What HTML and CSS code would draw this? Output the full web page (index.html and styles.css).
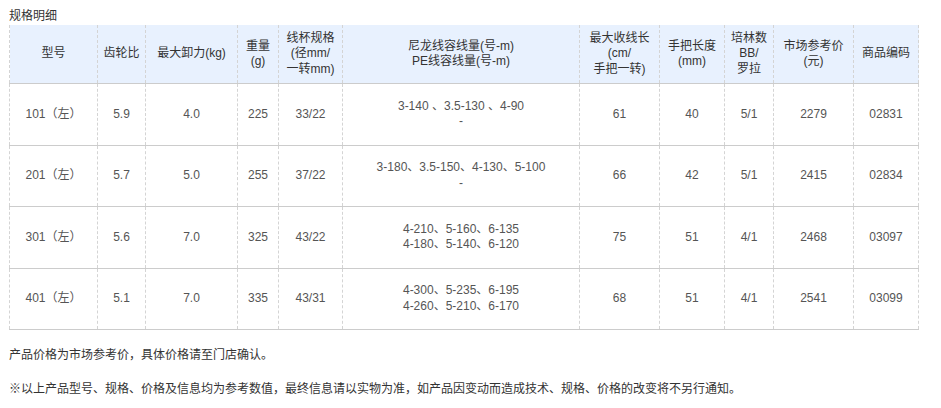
FILE: index.html
```html
<!DOCTYPE html>
<html lang="zh-CN">
<head>
<meta charset="utf-8">
<title>规格明细</title>
<link rel="stylesheet" href="styles.css">
</head>
<body>
<div class="page">
  <div class="title">规格明细</div>
  <table class="spec">
    <colgroup>
      <col class="c1"><col class="c2"><col class="c3"><col class="c4"><col class="c5"><col class="c6"><col class="c7"><col class="c8"><col class="c9"><col class="c10"><col class="c11">
    </colgroup>
    <thead>
      <tr>
        <th>型号</th>
        <th>齿轮比</th>
        <th>最大卸力(kg)</th>
        <th>重量<br>(g)</th>
        <th>线杯规格<br>(径mm/<br>一转mm)</th>
        <th>尼龙线容线量(号-m)<br>PE线容线量(号-m)</th>
        <th>最大收线长<br>(cm/<br>手把一转)</th>
        <th>手把长度<br>(mm)</th>
        <th>培林数<br>BB/<br>罗拉</th>
        <th>市场参考价<br>(元)</th>
        <th>商品编码</th>
      </tr>
    </thead>
    <tbody>
      <tr>
        <td>101（左）</td><td>5.9</td><td>4.0</td><td>225</td><td>33/22</td>
        <td>3-140 、3.5-130 、4-90<br>-</td>
        <td>61</td><td>40</td><td>5/1</td><td>2279</td><td>02831</td>
      </tr>
      <tr>
        <td>201（左）</td><td>5.7</td><td>5.0</td><td>255</td><td>37/22</td>
        <td>3-180、3.5-150、4-130、5-100<br>-</td>
        <td>66</td><td>42</td><td>5/1</td><td>2415</td><td>02834</td>
      </tr>
      <tr>
        <td>301（左）</td><td>5.6</td><td>7.0</td><td>325</td><td>43/22</td>
        <td>4-210、5-160、6-135<br>4-180、5-140、6-120</td>
        <td>75</td><td>51</td><td>4/1</td><td>2468</td><td>03097</td>
      </tr>
      <tr>
        <td>401（左）</td><td>5.1</td><td>7.0</td><td>335</td><td>43/31</td>
        <td>4-300、5-235、6-195<br>4-260、5-210、6-170</td>
        <td>68</td><td>51</td><td>4/1</td><td>2541</td><td>03099</td>
      </tr>
    </tbody>
  </table>
  <p class="note first">产品价格为市场参考价，具体价格请至门店确认。</p>
  <p class="note">※以上产品型号、规格、价格及信息均为参考数值，最终信息请以实物为准，如产品因变动而造成技术、规格、价格的改变将不另行通知。</p>
</div>
</body>
</html>
```

FILE: styles.css
```css
html, body {
  margin: 0;
  padding: 0;
  background: #ffffff;
}

body {
  font-family: "Liberation Sans", Arial, "Noto Sans CJK SC", sans-serif;
  font-size: 12px;
  color: #333333;
}

.page {
  padding: 8px 9px 0 9px;
}

.title {
  line-height: 17px;
  color: #333333;
}

.spec {
  border-collapse: collapse;
  table-layout: fixed;
  width: 909px;
}

.c1 { width: 88px; }
.c2 { width: 48px; }
.c3 { width: 92px; }
.c4 { width: 41px; }
.c5 { width: 64px; }
.c6 { width: 237px; }
.c7 { width: 80px; }
.c8 { width: 65px; }
.c9 { width: 49px; }
.c10 { width: 80px; }
.c11 { width: 65px; }

.spec th,
.spec td {
  text-align: center;
  vertical-align: middle;
  padding: 0;
  border-left: 1px dashed #d4d4d4;
  border-right: 1px dashed #d4d4d4;
  border-bottom: 1px solid #cccccc;
  line-height: 15.5px;
}

.spec th {
  background: #e8f1fe;
  font-weight: normal;
  color: #333333;
  height: 58px;
}

.spec td {
  color: #555555;
  height: 60.5px;
}

.note {
  margin: 14px 0 0 0;
  line-height: 20px;
  color: #333333;
}

.note.first {
  margin-top: 15px;
}
```
